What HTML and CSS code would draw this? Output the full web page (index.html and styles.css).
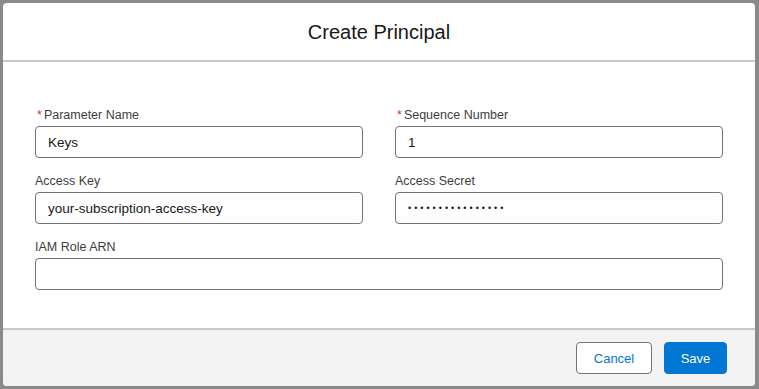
FILE: index.html
```
<!DOCTYPE html>
<html>
<head>
<meta charset="utf-8">
<link rel="stylesheet" href="styles.css">
</head>
<body>
<div class="backdrop">
  <div class="modal">
    <header class="modal-header">
      <h1 class="title">Create Principal</h1>
    </header>
    <div class="modal-body">
      <div class="grid">
        <div class="field">
          <label class="label"><abbr class="req">*</abbr>Parameter Name</label>
          <input class="input" type="text" value="Keys">
        </div>
        <div class="field">
          <label class="label"><abbr class="req">*</abbr>Sequence Number</label>
          <input class="input" type="text" value="1">
        </div>
        <div class="field">
          <label class="label">Access Key</label>
          <input class="input" type="text" value="your-subscription-access-key">
        </div>
        <div class="field">
          <label class="label">Access Secret</label>
          <input class="input secret" type="password" value="abcdefghijklmnop">
        </div>
        <div class="field full">
          <label class="label">IAM Role ARN</label>
          <input class="input" type="text" value="">
        </div>
      </div>
    </div>
    <footer class="modal-footer">
      <button class="btn btn-neutral">Cancel</button>
      <button class="btn btn-brand">Save</button>
    </footer>
  </div>
</div>
</body>
</html>
```
FILE: styles.css
```
* { box-sizing: border-box; }
html, body { margin: 0; padding: 0; }
body {
  width: 759px;
  height: 389px;
  overflow: hidden;
  font-family: "Liberation Sans", Arial, sans-serif;
  background: #8a8a8a;
}
.backdrop {
  padding: 3px 4px 3px 3px;
  height: 389px;
}
.modal {
  width: 752px;
  height: 383px;
  background: #fff;
  border-radius: 4px;
  overflow: hidden;
  display: flex;
  flex-direction: column;
}
.modal-header {
  height: 59px;
  border-bottom: 2px solid #c9c9c9;
  display: flex;
  align-items: center;
  justify-content: center;
}
.title {
  margin: 0;
  font-size: 20px;
  font-weight: 400;
  color: #181818;
  padding-top: 1px;
}
.modal-body {
  flex: 1;
  padding: 43px 32px 0 32px;
}
.grid {
  display: grid;
  grid-template-columns: 1fr 1fr;
  column-gap: 32px;
  row-gap: 13px;
}
.field { display: flex; flex-direction: column; }
.full { grid-column: 1 / 3; }
.label {
  font-size: 12.5px;
  line-height: 18px;
  color: #3e3e3c;
  padding-top: 1px;
  margin-bottom: 2px;
}
.req {
  color: #c23934;
  text-decoration: none;
  border: 0;
  margin: 0 2px;
}
.input {
  height: 32px;
  border: 1px solid #747474;
  border-radius: 4px;
  padding: 0 12px;
  font-family: "Liberation Sans", Arial, sans-serif;
  font-size: 13.5px;
  color: #181818;
  background: #fff;
  outline: none;
}
.secret {
  font-size: 9px;
  letter-spacing: 3px;
}
.modal-footer {
  height: 58px;
  border-top: 2px solid #c9c9c9;
  background: #f3f3f3;
  display: flex;
  justify-content: flex-end;
  align-items: flex-start;
  padding: 12px 28px 0 0;
  gap: 12px;
}
.btn {
  height: 32px;
  border-radius: 4px;
  font-family: "Liberation Sans", Arial, sans-serif;
  font-size: 13px;
  padding: 0;
  cursor: pointer;
}
.btn-neutral {
  width: 76px;
  background: #fff;
  border: 1px solid #747474;
  color: #0176d3;
}
.btn-brand {
  width: 63px;
  background: #0176d3;
  border: 1px solid #0176d3;
  color: #fff;
}
```
